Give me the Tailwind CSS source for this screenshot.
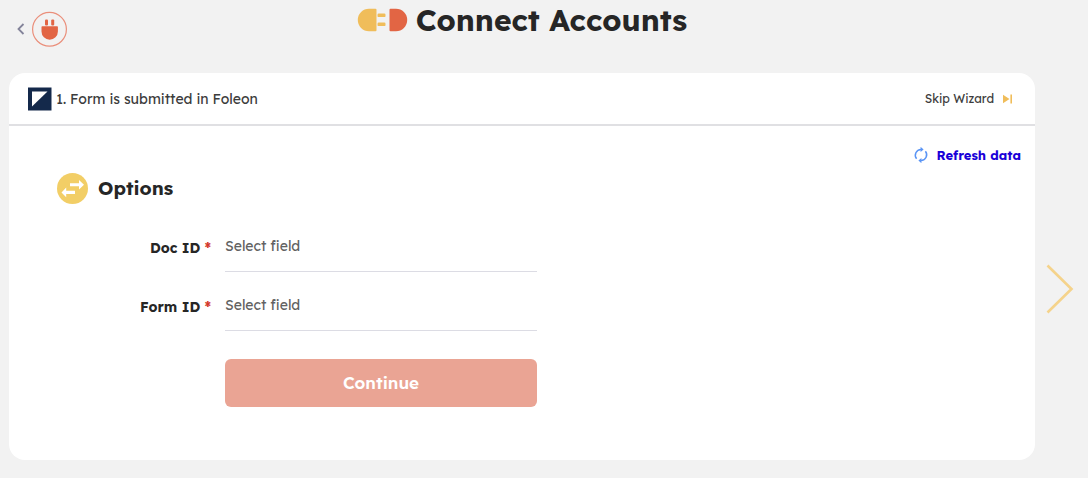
<!DOCTYPE html>
<html lang="en">
<head>
    <meta charset="UTF-8">
    <meta name="viewport" content="width=device-width, initial-scale=1.0">
    <title>Connect Accounts</title>
    <script src="https://cdn.jsdelivr.net/npm/@tailwindcss/browser@4"></script>
</head>
<body class="bg-[#f2f2f2] font-['Lexend','Inter',sans-serif] text-[#262626]">
    <!-- Page header -->
    <header class="grid grid-cols-[1fr_auto_1fr] items-start pl-2 pr-13 h-[73px]">
        <a href="#" aria-label="Back" class="flex items-center gap-1 pl-2 pt-[11px] justify-self-start">
            <svg class="w-3 h-3" viewBox="0 0 12 12" fill="none" stroke="#84849a" stroke-width="1.8"><path d="M7.500 1l-5 5 5 5"/></svg>
            <svg class="w-9 h-9" viewBox="0 0 36 36">
                <circle cx="17.500" cy="18.300" r="16.900" fill="none" stroke="#ea8f7b" stroke-width="1.200"/>
                <rect x="13" y="8.500" width="3" height="6" rx="1" fill="#e26544"/>
                <rect x="19.200" y="8.500" width="3" height="6" rx="1" fill="#e26544"/>
                <path d="M10.200 15.300h15a.7.7 0 0 1 .7.7V20.500a8.200 8.200 0 0 1-16.400 0V16a.7.7 0 0 1 .7-.7z" fill="#e26544"/>
            </svg>
        </a>
        <h1 class="flex items-center gap-2 text-[30px] leading-10 font-bold">
            <svg class="w-[51px] h-6" viewBox="0 0 51 24">
                <path d="M12 .8h6.500a1 1 0 0 1 1 1v20.400a1 1 0 0 1-1 1H12A11.200 11.200 0 0 1 12 .8z" fill="#f0bd5a"/>
                <rect x="20.500" y="5.500" width="8" height="3.600" rx="1.200" fill="#f0bd5a"/>
                <rect x="20.500" y="14.500" width="8" height="3.600" rx="1.200" fill="#f0bd5a"/>
                <path d="M33.500 .8H39a11.200 11.200 0 0 1 0 22.400h-5.500a1 1 0 0 1-1-1V1.800a1 1 0 0 1 1-1z" fill="#e26544"/>
            </svg>
            Connect Accounts
        </h1>
    </header>

    <div class="flex items-stretch pl-[9px]">
        <!-- Wizard card -->
        <main class="flex-1 bg-white rounded-2xl mb-4">
            <div class="flex items-center justify-between h-[53px] pl-[19px] pr-[21px] border-b-2 border-[#e0e0e3]">
                <h2 class="flex items-center gap-1 text-sm text-[#3c3c3c]">
                    <svg class="w-6 h-6" viewBox="0 0 24 24">
                        <path d="M0 .5h23.500V23.500H0z" fill="#14294b"/>
                        <path d="M4 4.500h15.500L4 19.500z" fill="#fff"/>
                    </svg>
                    1. Form is submitted in Foleon
                </h2>
                <button type="button" class="flex items-center gap-2 text-xs text-[#3c3c3c]">
                    Skip Wizard
                    <svg class="w-3 h-3" viewBox="0 0 12 12" fill="#f0bd5a"><path d="M1 1.700L7.500 6 1 10.300zM8.400 1.500H10v9H8.400z"/></svg>
                </button>
            </div>

            <div class="flex justify-end px-[14px] pt-[19px]">
                <button type="button" class="flex items-center gap-2 text-[13px] leading-5 font-bold text-[#1a00d8]">
                    <svg class="w-4 h-4" viewBox="0 0 16 16" fill="none" stroke="#5b95f5" stroke-width="1.500">
                        <path d="M3.600 11.800A5.800 5.800 0 0 1 8 2.400M12.400 4.200A5.800 5.800 0 0 1 8 13.600"/>
                        <path d="M7.600 -.2l3 2.600-3 2.600zM8.400 11l-3 2.600 3 2.600z" fill="#5b95f5" stroke="none"/>
                    </svg>
                    Refresh data
                </button>
            </div>

            <form class="px-12 pt-[7px] pb-[53px]">
                <h3 class="flex items-center gap-[10px] h-8 text-[19px] font-bold">
                    <svg class="w-[31px] h-[31px]" viewBox="0 0 31 31">
                        <circle cx="15.500" cy="15.500" r="15.500" fill="#f2ce66"/>
                        <path d="M13 10.200h9V7l5 4.800-5 4.700v-3.200h-9zM18 17.800H9.200v-3.200l-4.700 4.800 4.700 4.800v-3.300H18z" fill="#fff"/>
                    </svg>
                    Options
                </h3>
                <div class="grid grid-cols-[154px_minmax(0,312px)] gap-x-[14px] pt-[18px]">
                    <label for="docId" class="text-right text-sm leading-5 font-bold pt-4">Doc ID <span class="text-[#d33a2c]">*</span></label>
                    <select id="docId" required class="appearance-none w-full h-[50px] mb-[9px] pb-[2px] bg-transparent border-b border-[#dcdce4] text-sm text-[#626262]">
                        <option value="">Select field</option>
                    </select>
                    <label for="formId" class="text-right text-sm leading-5 font-bold pt-4">Form ID <span class="text-[#d33a2c]">*</span></label>
                    <select id="formId" required class="appearance-none w-full h-[50px] mb-[9px] pb-[2px] bg-transparent border-b border-[#dcdce4] text-sm text-[#626262]">
                        <option value="">Select field</option>
                    </select>
                    <button type="submit" class="col-start-2 h-12 mt-[19px] rounded-md bg-[#eaa494] text-white text-[17px] font-semibold">Continue</button>
                </div>
            </form>
        </main>

        <!-- Next step -->
        <button type="button" aria-label="Next" class="flex w-[53px] items-center justify-center pr-1 pt-7">
            <svg class="w-7 h-[50px]" viewBox="0 0 28 50" fill="none" stroke="#f5d38b" stroke-width="2.600"><path d="M1.500 1.500L25.500 25l-24 23.500"/></svg>
        </button>
    </div>
</body>
</html>
